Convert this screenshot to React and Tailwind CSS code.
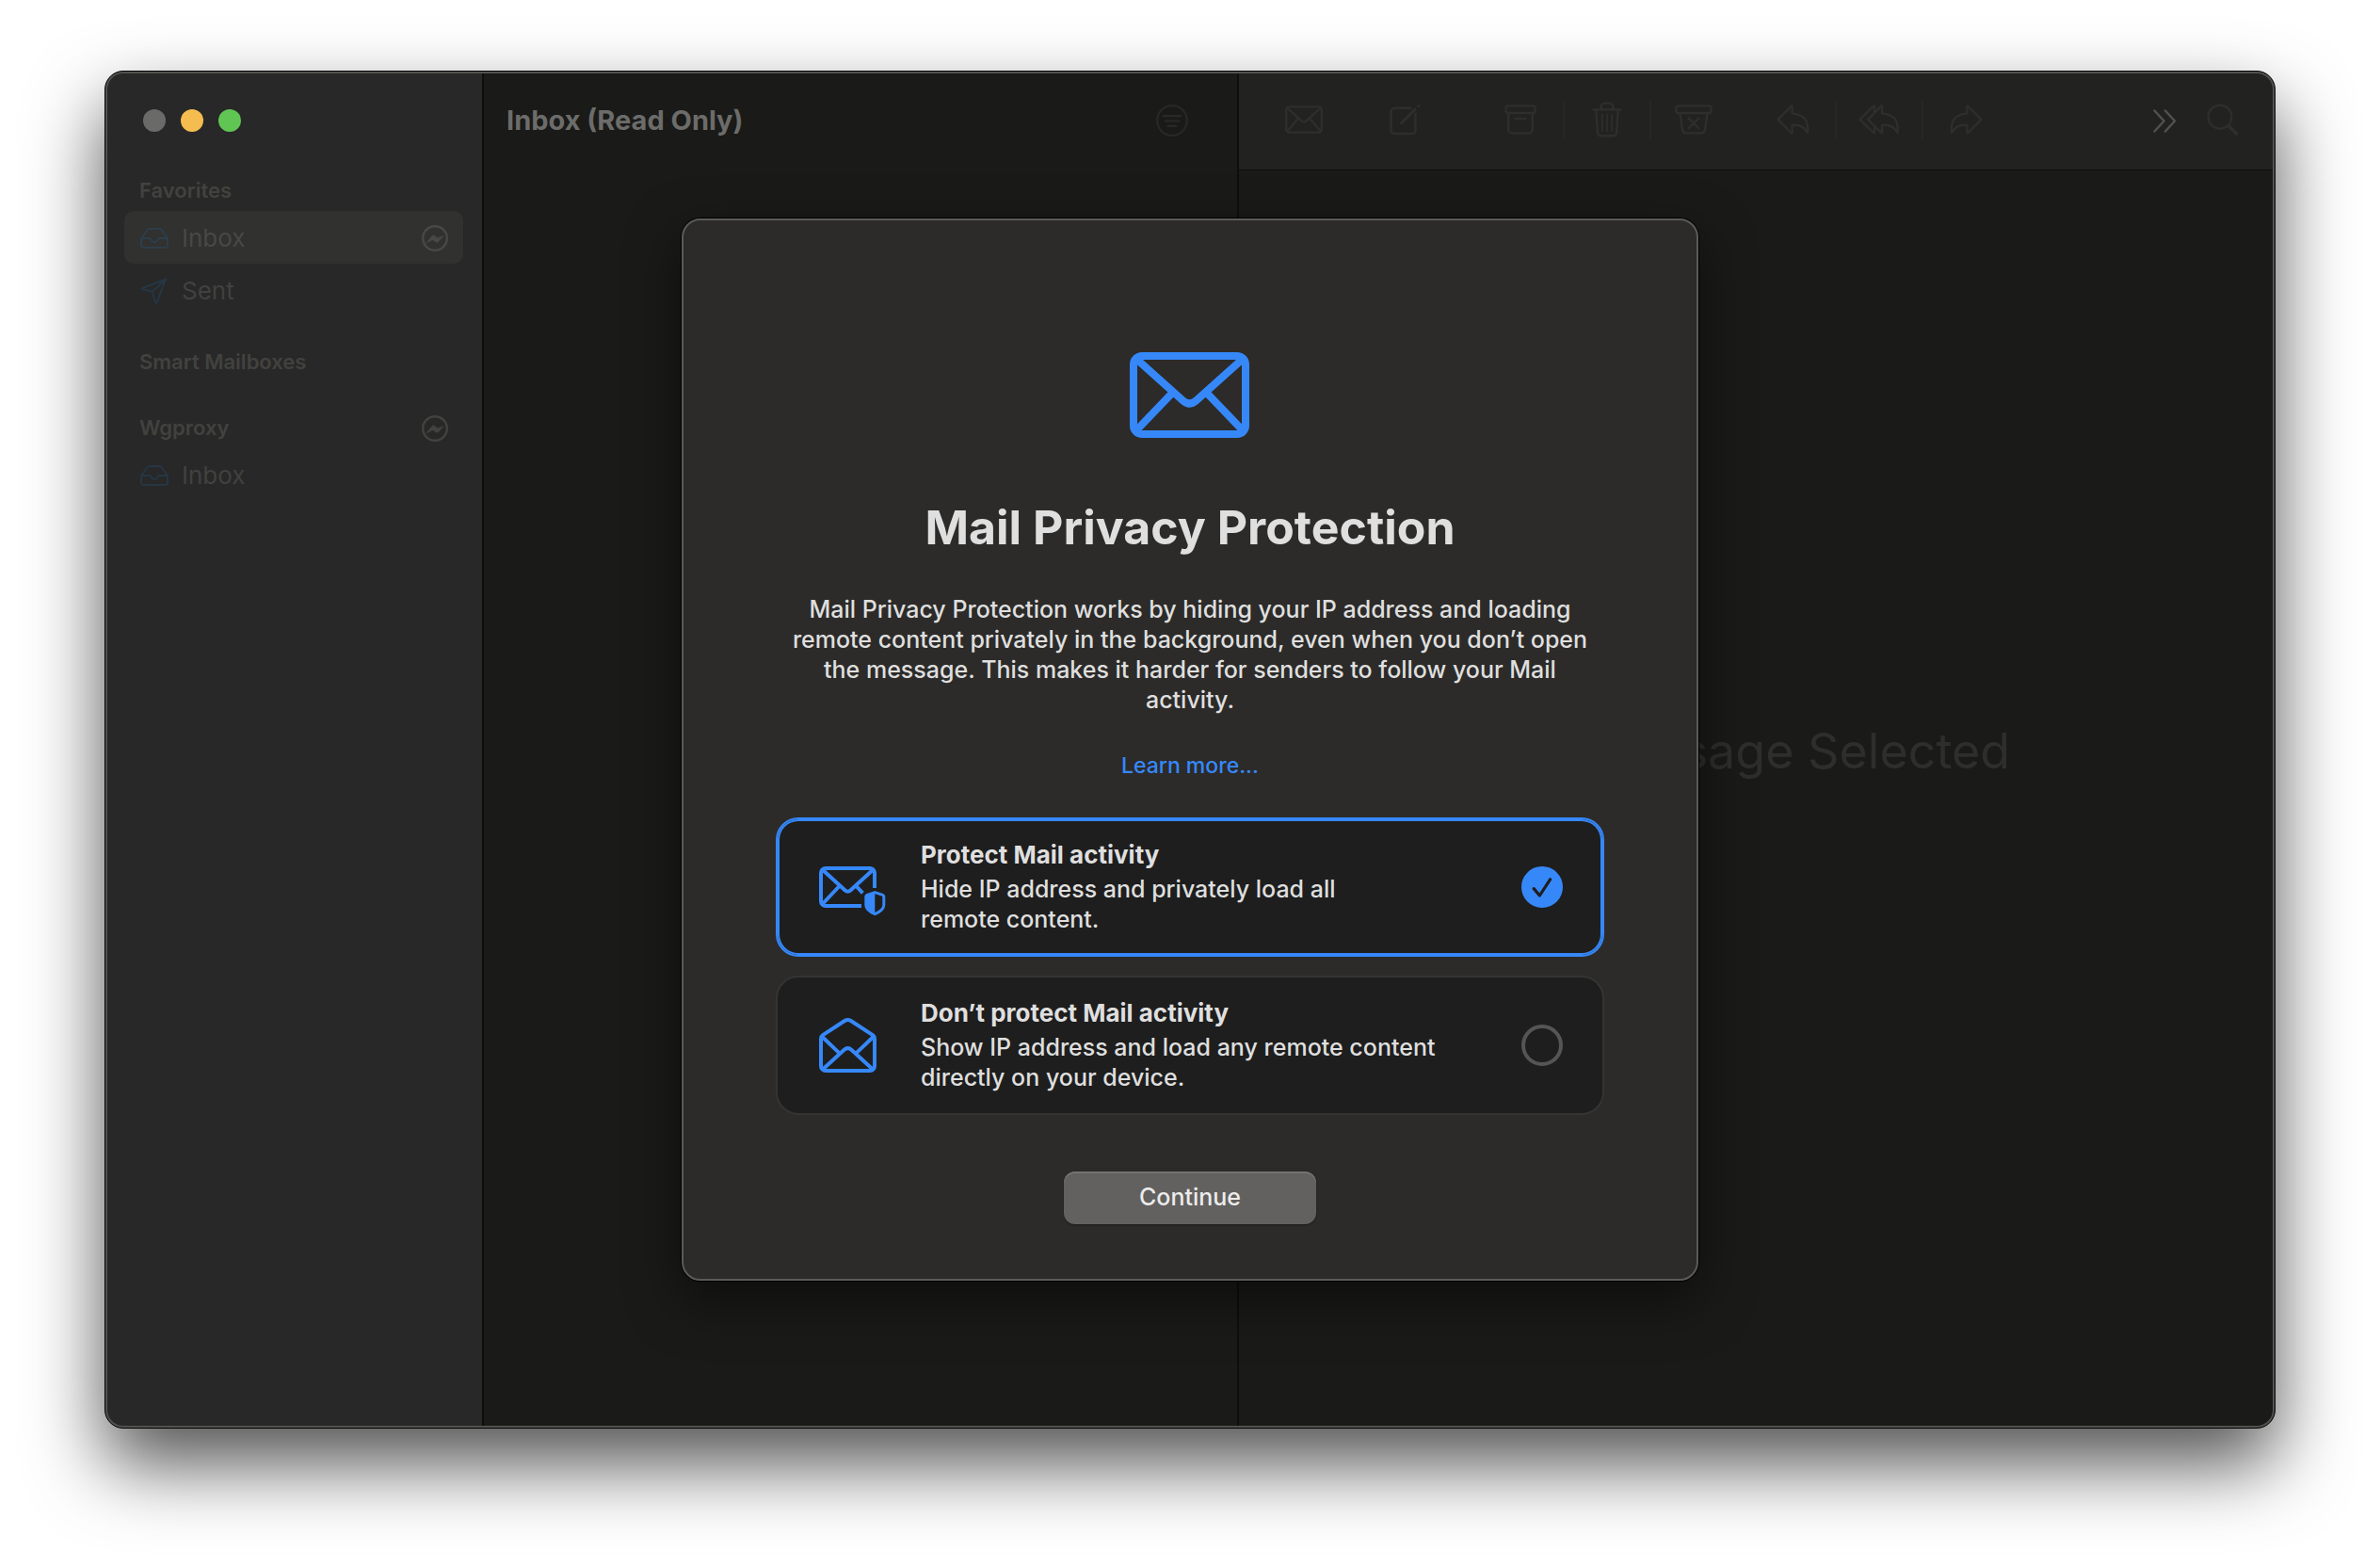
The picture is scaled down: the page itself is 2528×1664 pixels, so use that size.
import React, { useState } from "react";

function Svg({ w, h, sw = 2, className = "", children }) {
  return (
    <svg
      width={w}
      height={h}
      viewBox={`0 0 ${w} ${h}`}
      fill="none"
      stroke="currentColor"
      strokeWidth={sw}
      strokeLinecap="round"
      strokeLinejoin="round"
      className={`shrink-0 ${className}`}
      aria-hidden="true"
    >
      {children}
    </svg>
  );
}

const TrayIcon = () => (
  <Svg w={30} h={22}>
    <path d="M1 11 L7.5 2.2 Q8.3 1 9.8 1 H20.2 Q21.7 1 22.5 2.2 L29 11 V18.5 a2.5 2.5 0 0 1 -2.5 2.5 H3.5 a2.5 2.5 0 0 1 -2.5 -2.5 Z" />
    <path d="M1 11 H10 Q11 11 11.5 12.5 Q12.5 15 15 15 Q17.5 15 18.5 12.5 Q19 11 20 11 H29" />
  </Svg>
);

const PlaneIcon = () => (
  <Svg w={30} h={28}>
    <path d="M27 1.5 L2 11 Q1.4 11.5 2 12 L12.5 15 L16.3 26.3 Q17 27 17.6 26.3 Z M27 1.5 L12.5 15" />
  </Svg>
);

const OfflineIcon = () => (
  <Svg w={28} h={28} sw={2.4}>
    <circle cx="14" cy="14" r="12.8" />
    <path d="M5.2 18.6 L11.4 11.2 Q12 10.5 12.9 11 L16.8 13.8 L22.8 11.8 L17.2 18 Q16.6 18.6 15.7 18.1 L11.8 15.7 Z" fill="currentColor" strokeWidth="0.8" />
  </Svg>
);

const FilterIcon = () => (
  <Svg w={34} h={34} sw={2.2}>
    <circle cx="17" cy="17" r="15.8" />
    <path d="M7.5 12.2 H26.5 M9.7 17.5 H24.3 M12.4 22.8 H21.6" />
  </Svg>
);

const MailIcon = () => (
  <Svg w={40} h={30} sw={2.4}>
    <rect x="1.2" y="1.4" width="37.6" height="27.2" rx="3.4" />
    <path d="M2.4 2.8 L17.6 16.4 Q20 18.4 22.4 16.4 L37.6 2.8 M13.8 14 L2.4 27 M26.2 14 L37.6 27" />
  </Svg>
);

const ComposeIcon = () => (
  <Svg w={34} h={34} sw={2.4}>
    <path d="M22.5 4.8 H5 a3.5 3.5 0 0 0 -3.5 3.5 V28.5 a3.5 3.5 0 0 0 3.5 3.5 H24 a3.5 3.5 0 0 0 3.5 -3.5 V11" />
    <path d="M12.6 20.8 L27 6.2" strokeWidth="3" />
    <circle cx="30.6" cy="2.6" r="1.7" fill="currentColor" stroke="none" />
  </Svg>
);

const ArchiveIcon = () => (
  <Svg w={34} h={32} sw={2.4}>
    <rect x="1.4" y="1.4" width="31.2" height="7.6" rx="2.4" />
    <path d="M4.2 9 V26.4 a4 4 0 0 0 4 4 H25.8 a4 4 0 0 0 4 -4 V9 M11.4 15 H22.6" />
  </Svg>
);

const TrashIcon = () => (
  <Svg w={32} h={38} sw={2.4}>
    <path d="M1.4 8.4 H30.6 M9.8 8.4 V5 a3.4 3.4 0 0 1 3.4 -3.4 h5.6 a3.4 3.4 0 0 1 3.4 3.4 V8.4 M4.2 8.4 L6 33 a3.4 3.4 0 0 0 3.4 3.3 H22.6 a3.4 3.4 0 0 0 3.4 -3.3 L27.8 8.4" />
    <path d="M10.8 13.4 V31 M16 13.4 V31 M21.2 13.4 V31" strokeWidth="1.8" />
  </Svg>
);

const JunkIcon = () => (
  <Svg w={40} h={32} sw={2.4}>
    <rect x="1.4" y="1.4" width="37.2" height="7.6" rx="2.6" />
    <path d="M5.4 9 L8 27 q.6 3.4 4 3.4 H28 q3.4 0 4 -3.4 L34.6 9 M14.8 14.6 L25.2 25 M25.2 14.6 L14.8 25" />
  </Svg>
);

const REPLY = "M15.6 1.6 L1.6 15.8 L15.6 30 Q16.6 30.6 16.6 29.4 V22 Q28 20.6 33 30 Q35 10.4 16.6 9.6 V2.2 Q16.6 0.8 15.6 1.6 Z";

const ReplyIcon = () => (
  <Svg w={35} h={32} sw={2.4}>
    <path d={REPLY} />
  </Svg>
);

const ReplyAllIcon = () => (
  <Svg w={44} h={32} sw={2.4}>
    <path d={REPLY} transform="translate(8.6 0)" />
    <path d="M17 7.4 V2.2 Q17 0.8 16 1.6 L1.6 15.8 L16 30 Q17 30.6 17 29.4 V24.4" />
  </Svg>
);

const ForwardIcon = () => (
  <Svg w={35} h={32} sw={2.4}>
    <path d={REPLY} transform="translate(35 0) scale(-1 1)" />
  </Svg>
);

const MoreIcon = () => (
  <Svg w={25} h={25} sw={2.4}>
    <path d="M1.5 1.5 L11.6 12.5 L1.5 23.5 M12.9 1.5 L23 12.5 L12.9 23.5" />
  </Svg>
);

const SearchIcon = () => (
  <Svg w={34} h={34} sw={2.4}>
    <circle cx="14" cy="14.2" r="12.4" />
    <path d="M23.4 23.8 L31.4 31.8" strokeWidth="4" />
  </Svg>
);

const HeroMail = () => (
  <Svg w={128} h={92} sw={8} className="text-[#3688f9]">
    <rect x="4" y="4" width="119" height="83" rx="9" />
    <path d="M8 8 L56 51 Q63.5 58 71 51 L119 8 M43.5 45 L8 82 M83.5 45 L119 82" strokeLinecap="butt" />
  </Svg>
);

const ProtectIcon = () => (
  <Svg w={72} h={64} sw={4} className="text-[#3688f9]">
    <g strokeLinecap="butt">
      <path d="M59 33 V17 a5 5 0 0 0 -5 -5 H7 a5 5 0 0 0 -5 5 V47 a5 5 0 0 0 5 5 H45" />
      <path d="M3.6 13.6 L26.6 34.6 Q30.5 38.8 34.4 34.6 L57.4 13.6 M21.5 31 L3.6 50 M39.5 31 L46.4 38.4" />
    </g>
    <path d="M59.3 37.6 L67.6 40.4 Q68.8 40.8 68.8 42 V51 Q68.8 56.6 59.3 60.6 Q49.8 56.6 49.8 51 V42 Q49.8 40.8 51 40.4 Z" strokeWidth="3" />
    <path d="M59.3 37.6 L50 41 V51 Q50 56.6 59.3 60.6 Z" fill="currentColor" stroke="none" />
  </Svg>
);

const OpenMailIcon = () => (
  <Svg w={72} h={64} sw={4} className="text-[#3688f9]">
    <path d="M2 25 Q2 22.6 4 21.2 L27.2 6 Q30.5 4 33.8 6 L57 21.2 Q59 22.6 59 25 V54 a5 5 0 0 1 -5 5 H7 a5 5 0 0 1 -5 -5 Z" />
    <path d="M3.4 23 L21.6 40.4 M57.6 23 L39.4 40.4 M4 57.4 L26.4 37 Q30.5 33.4 34.6 37 L57 57.4" strokeLinecap="butt" />
  </Svg>
);

function NavRow({ icon, label, selected, offline }) {
  return (
    <a
      href="#"
      className={`flex h-14 items-center gap-3.5 rounded-[10px] pt-px pr-4 pl-[17px] text-[26px] ${
        selected ? "bg-[#31312f] text-[#484848]" : "text-[#41413f]"
      }`}
    >
      <span className={selected ? "text-[#2d3d4b]" : "text-[#253644]"}>{icon}</span>
      <span className="flex-1">{label}</span>
      {offline && <OfflineIcon />}
    </a>
  );
}

function NavSection({ title, offline, children }) {
  return (
    <section>
      <h2 className="flex h-[42px] items-center justify-between px-4 pb-px text-[22px] font-semibold text-[#42423f]">
        {title}
        {offline && <OfflineIcon />}
      </h2>
      {children}
    </section>
  );
}

function ToolButton({ label, children }) {
  return (
    <button type="button" aria-label={label} className="flex h-10 w-[90px] items-center justify-center">
      {children}
    </button>
  );
}

const Divider = () => <span className="h-10 w-0.5 bg-[#272725]" />;

function Option({ id, value, choice, onChange, icon, title, lines }) {
  const on = choice === value;
  return (
    <label
      htmlFor={id}
      className={`flex h-[148px] items-center rounded-3xl border-2 bg-[#1e1e1e] pr-[42px] pl-11 ${
        on ? "border-[#3688f9] inset-ring-2 inset-ring-[#3688f9]" : "border-[#343434]"
      }`}
    >
      {icon}
      <span className="ml-9 flex flex-1 flex-col gap-1 text-left leading-8">
        <span className="text-[26px] leading-8 font-bold">{title}</span>
        <span className="text-[25px] leading-8 font-medium">
          {lines[0]}
          <br />
          {lines[1]}
        </span>
      </span>
      <span className="relative flex size-11">
        <input
          id={id}
          type="radio"
          name="privacy"
          checked={on}
          onChange={() => onChange(value)}
          className="size-11 appearance-none rounded-full border-4 border-[#555555] checked:border-[#3688f9] checked:bg-[#3688f9]"
        />
        {on && (
          <span className="pointer-events-none absolute inset-0 text-[#1e1e1e]">
            <Svg w={44} h={44} sw={3.2}>
              <path d="M13.2 23.6 L19.4 31 L30.6 13.8" />
            </Svg>
          </span>
        )}
      </span>
    </label>
  );
}

function PrivacyDialog() {
  const [choice, setChoice] = useState("protect");
  return (
    <div
      role="dialog"
      aria-labelledby="dialog-title"
      className="flex w-[1080px] flex-col items-center rounded-[20px] border-2 border-[#5b5b59] bg-[#2c2b29] px-[98px] pt-[140px] pb-[58px] text-[#dfdfdf] shadow-[0_0_0_1px_#000,0_20px_56px_rgba(0,0,0,0.5)]"
    >
      <HeroMail />
      <h1 id="dialog-title" className="mt-[62px] text-[50px] leading-[64px] font-bold">
        Mail Privacy Protection
      </h1>
      <p className="mt-[39px] text-center text-[25px] leading-8 font-medium whitespace-nowrap">
        Mail Privacy Protection works by hiding your IP address and loading
        <br />
        remote content privately in the background, even when you don’t open
        <br />
        the message. This makes it harder for senders to follow your Mail
        <br />
        activity.
      </p>
      <a href="#" className="mt-[38px] text-[23px] leading-8 font-medium text-[#3688f9]">
        Learn more...
      </a>
      <div className="mt-[39px] flex w-full flex-col gap-5">
        <Option
          id="opt-protect"
          value="protect"
          choice={choice}
          onChange={setChoice}
          icon={<ProtectIcon />}
          title="Protect Mail activity"
          lines={["Hide IP address and privately load all", "remote content."]}
        />
        <Option
          id="opt-open"
          value="open"
          choice={choice}
          onChange={setChoice}
          icon={<OpenMailIcon />}
          title="Don’t protect Mail activity"
          lines={["Show IP address and load any remote content", "directly on your device."]}
        />
      </div>
      <button
        type="button"
        className="mt-[60px] h-14 w-[268px] rounded-xl bg-[#62615f] text-[25px] font-medium text-[#ececec] shadow-[inset_0_2px_0_#737270,0_1px_2px_rgba(0,0,0,0.4)]"
      >
        Continue
      </button>
    </div>
  );
}

export default function App() {
  return (
    <div
      className="flex min-h-screen bg-white px-[111px] pt-[75px] pb-[147px]"
      style={{ fontFamily: 'Inter, "Liberation Sans", sans-serif' }}
    >
      <div className="relative grid flex-1 grid-cols-[402px_802px_minmax(0,1fr)] overflow-hidden rounded-[20px] border border-black bg-[#1a1a18] shadow-[0_38px_80px_rgba(0,0,0,0.68)]">
        <aside className="border-r-2 border-[#0e0e0e] bg-[#282828]">
          <div className="flex h-[104px] items-center gap-4 px-10">
            <button type="button" aria-label="Close" className="size-6 rounded-full bg-[#6a6a68]" />
            <button type="button" aria-label="Minimize" className="size-6 rounded-full bg-[#f5bd4f]" />
            <button type="button" aria-label="Zoom" className="size-6 rounded-full bg-[#61c554]" />
          </div>
          <nav className="flex flex-col gap-7 px-5 pt-0.5">
            <NavSection title="Favorites">
              <NavRow icon={<TrayIcon />} label="Inbox" selected offline />
              <NavRow icon={<PlaneIcon />} label="Sent" />
            </NavSection>
            <NavSection title="Smart Mailboxes" />
            <NavSection title="Wgproxy" offline>
              <NavRow icon={<TrayIcon />} label="Inbox" />
            </NavSection>
          </nav>
        </aside>

        <section className="border-r-2 border-[#0e0e0e]">
          <header className="flex h-[104px] items-center justify-between pr-[52px] pb-px pl-6">
            <h2 className="text-[29px] font-bold text-[#6c6c6a]">Inbox (Read Only)</h2>
            <button type="button" aria-label="Filter" className="text-[#282826]">
              <FilterIcon />
            </button>
          </header>
        </section>

        <main className="flex flex-col">
          <div className="flex h-[105px] items-center border-b border-[#0e0e0e] bg-[#222220] pr-[38px] pb-0.5 pl-6 text-[#2e2e2c]">
            <div className="flex gap-[18px]">
              <ToolButton label="Get mail"><MailIcon /></ToolButton>
              <ToolButton label="New message"><ComposeIcon /></ToolButton>
            </div>
            <div className="ml-8 flex">
              <ToolButton label="Archive"><ArchiveIcon /></ToolButton>
              <Divider />
              <ToolButton label="Delete"><TrashIcon /></ToolButton>
              <Divider />
              <ToolButton label="Junk"><JunkIcon /></ToolButton>
            </div>
            <div className="ml-[15px] flex">
              <ToolButton label="Reply"><ReplyIcon /></ToolButton>
              <Divider />
              <ToolButton label="Reply all"><ReplyAllIcon /></ToolButton>
              <Divider />
              <ToolButton label="Forward"><ForwardIcon /></ToolButton>
            </div>
            <div className="ml-auto flex items-center gap-8">
              <button type="button" aria-label="More" className="pt-0.5 text-[#51514f]"><MoreIcon /></button>
              <button type="button" aria-label="Search"><SearchIcon /></button>
            </div>
          </div>
          <div className="flex flex-1 items-center justify-center pb-[102px]">
            <p className="text-[52px] text-[#2e2e2c]">No Message Selected</p>
          </div>
        </main>

        <div className="pointer-events-none absolute inset-0 rounded-[19px] border-2 border-[#52534f]" />
        <div className="absolute inset-0 flex items-center justify-center">
          <PrivacyDialog />
        </div>
      </div>
    </div>
  );
}
